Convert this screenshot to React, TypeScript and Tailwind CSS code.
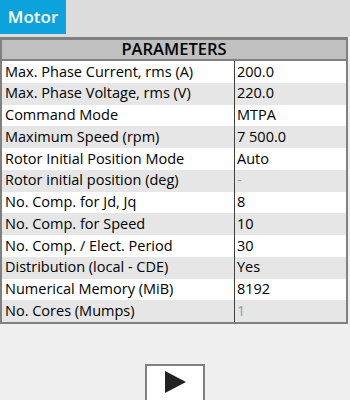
import React from 'react';

const rows: { label: string; value: string; disabled?: boolean }[] = [
  { label: 'Max. Phase Current, rms (A)', value: '200.0' },
  { label: 'Max. Phase Voltage, rms (V)', value: '220.0' },
  { label: 'Command Mode', value: 'MTPA' },
  { label: 'Maximum Speed (rpm)', value: '7 500.0' },
  { label: 'Rotor Initial Position Mode', value: 'Auto' },
  { label: 'Rotor initial position (deg)', value: '-', disabled: true },
  { label: 'No. Comp. for Jd, Jq', value: '8' },
  { label: 'No. Comp. for Speed', value: '10' },
  { label: 'No. Comp. / Elect. Period', value: '30' },
  { label: 'Distribution (local - CDE)', value: 'Yes' },
  { label: 'Numerical Memory (MiB)', value: '8192' },
  { label: 'No. Cores (Mumps)', value: '1', disabled: true },
];

export default function App() {
  return (
    <div className="h-[400px] w-[350px] overflow-hidden bg-[#f0f0f0] font-['Open_Sans',sans-serif] text-black">
      <div className="h-[37px] bg-[#dcdcdc]">
        <div className="flex h-[34px] w-[66px] items-center justify-center bg-[#0ca3dc] text-[17px] font-semibold text-white">
          Motor
        </div>
      </div>

      <div className="w-[348px] border-x-2 border-t-[3px] border-b-2 border-[#808080]">
        <div className="flex h-[21px] items-center justify-center border-b-2 border-[#808080] bg-[#c0c0c0] text-[16.5px] font-semibold leading-none">
          PARAMETERS
        </div>
        {rows.map((row, i) => (
          <div
            key={row.label}
            className={`flex h-[21.75px] items-center text-[14.5px] leading-none ${i % 2 === 0 ? 'bg-white' : 'bg-[#e6e6e6]'}`}
          >
            <div className="flex h-full w-[233px] items-center border-r border-[#404040] pl-[3px]">{row.label}</div>
            <div className={`pl-[2px] ${row.disabled ? 'text-[#9a9a9a]' : ''}`}>{row.value}</div>
          </div>
        ))}
      </div>

      <div className="flex justify-center pt-[40px]">
        <button
          type="button"
          className="flex h-[40px] w-[60px] items-start justify-center border-2 border-[#808080] bg-white pt-[4px]"
        >
          <svg width="24" height="24" viewBox="0 0 24 24">
            <polygon points="2,1 23,12 2,23" fill="#222" />
          </svg>
        </button>
      </div>
    </div>
  );
}
